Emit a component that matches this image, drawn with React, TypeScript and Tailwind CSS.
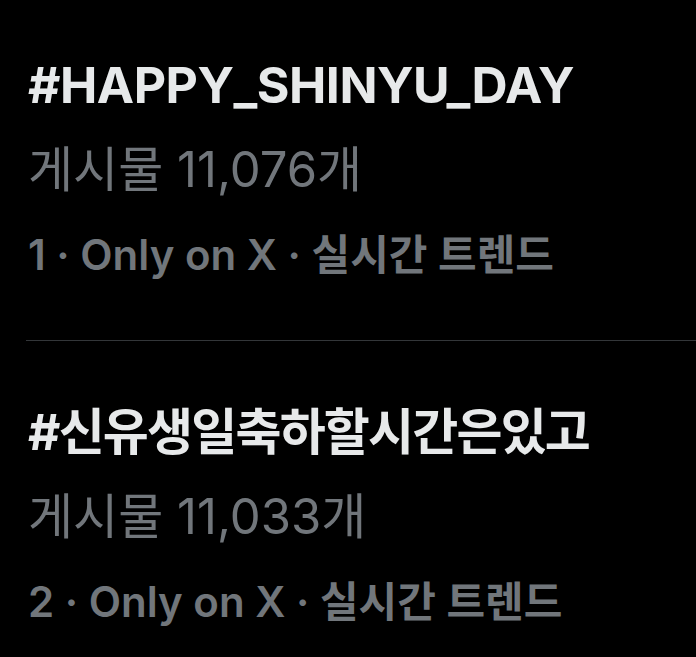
import React from "react";

const font = { fontFamily: "Inter, 'Noto Sans CJK KR', sans-serif" };

function Trend({
  title,
  count,
  rank,
  korean,
}: {
  title: string;
  count: string;
  rank: string;
  korean?: boolean;
}) {
  return (
    <div className="flex flex-col gap-[25px] pl-[28px]">
      <div
        className={
          korean
            ? "h-[60px] text-[50px] leading-[60px] font-bold text-[#e7e9ea] tracking-[-1.8px] whitespace-nowrap"
            : "h-[60px] text-[50px] leading-[60px] font-bold text-[#e7e9ea] tracking-[-0.5px] whitespace-nowrap"
        }
      >
        {title}
      </div>
      <div className="h-[60px] text-[49px] leading-[60px] font-normal text-[#71767b] whitespace-nowrap">
        게시물 {count}개
      </div>
      <div className="h-[60px] text-[42px] leading-[60px] font-semibold text-[#71767b] whitespace-nowrap">
        {rank} · Only on X · 실시간 트렌드
      </div>
    </div>
  );
}

export default function App() {
  return (
    <div className="w-[696px] h-[657px] bg-black overflow-hidden" style={font}>
      <div className="pt-[55px]">
        <Trend title="#HAPPY_SHINYU_DAY" count="11,076" rank="1" />
      </div>
      <div className="mt-[55px] ml-[26px] h-px bg-[#333639]" />
      <div className="pt-[61px]">
        <Trend title="#신유생일축하할시간은있고" count="11,033" rank="2" korean />
      </div>
    </div>
  );
}
